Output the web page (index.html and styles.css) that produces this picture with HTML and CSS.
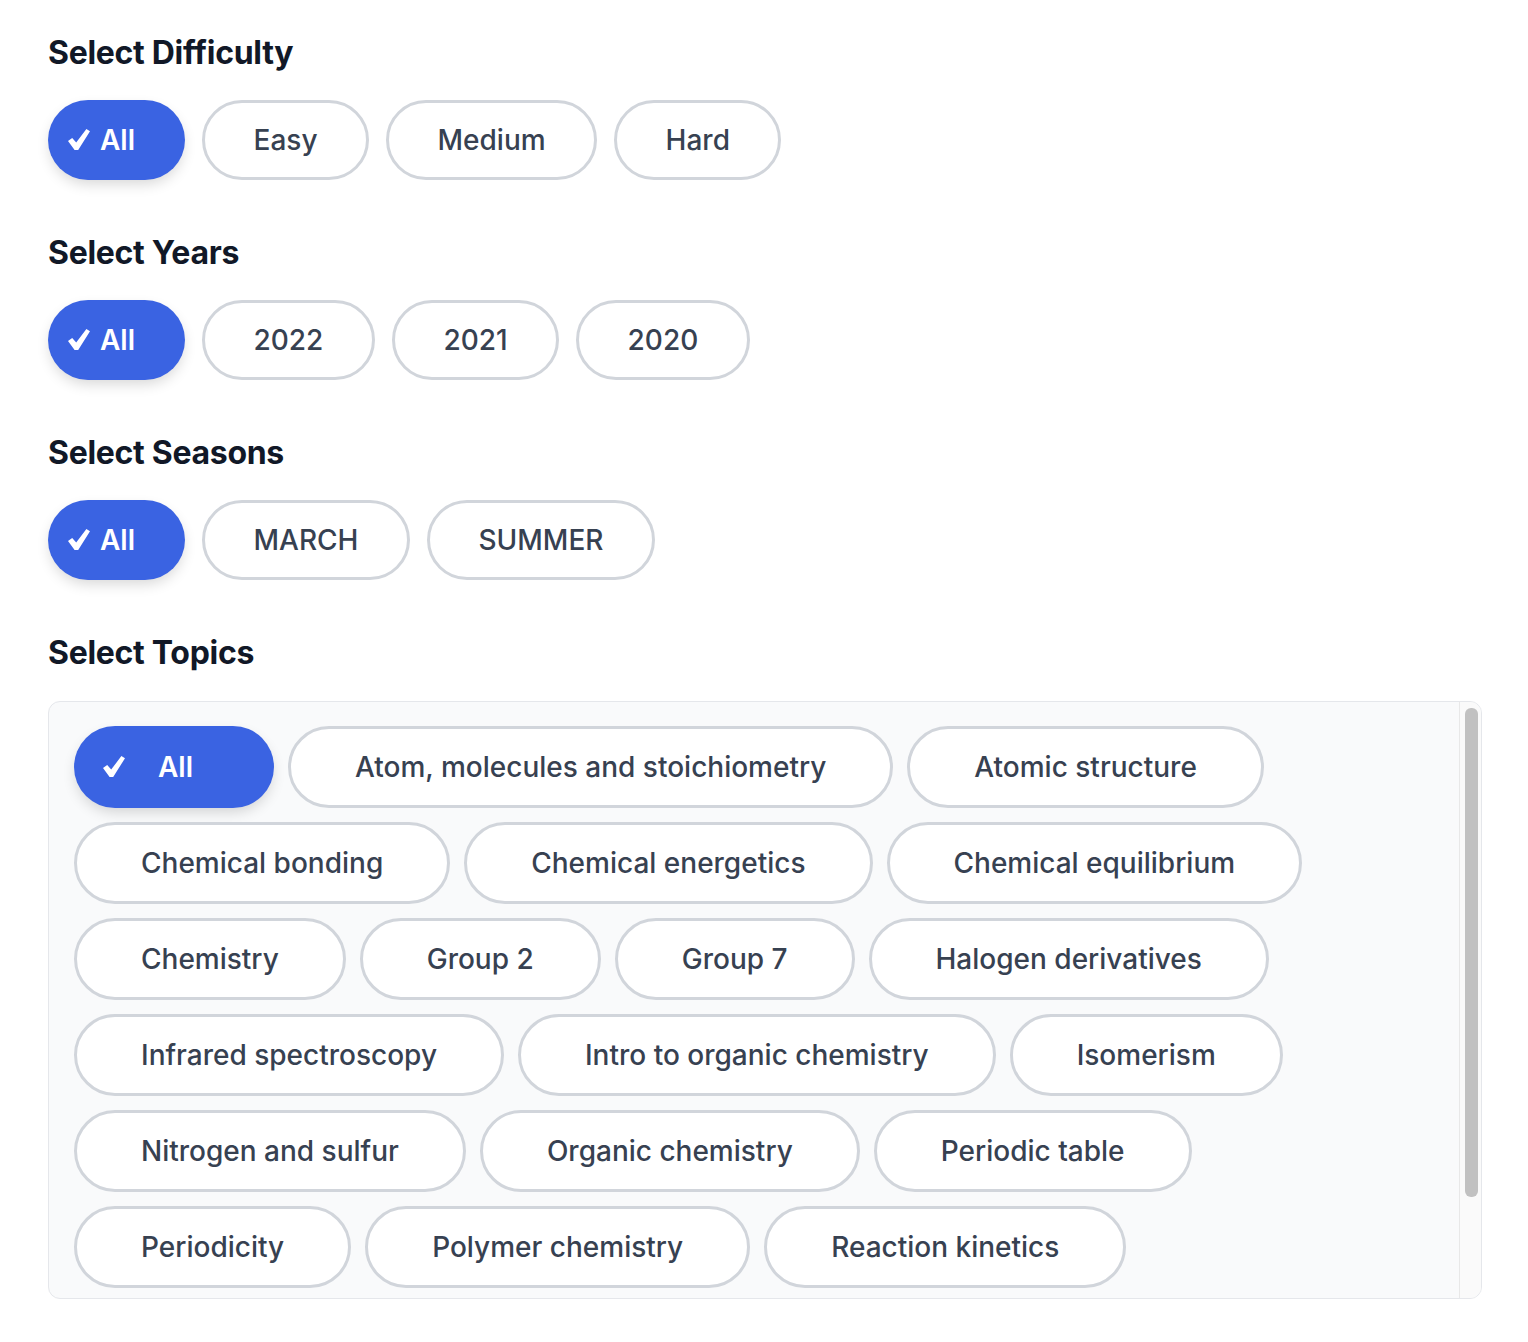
FILE: index.html
```html
<!DOCTYPE html>
<html lang="en">
<head>
<meta charset="utf-8">
<title>Filters</title>
<link rel="stylesheet" href="styles.css">
</head>
<body>
<div class="page">
  <section class="section">
    <h2 class="title">Select Difficulty</h2>
    <div class="options">
      <button class="chip chip-active"><svg class="check" viewBox="0 0 22 21" aria-hidden="true"><path d="M0 12 L4.2 9 L8.2 13.6 L18.4 0 L22 2.2 L10.2 21 L6.6 21 Z"/></svg>All</button>
      <button class="chip">Easy</button>
      <button class="chip">Medium</button>
      <button class="chip">Hard</button>
    </div>
  </section>
  <section class="section">
    <h2 class="title">Select Years</h2>
    <div class="options">
      <button class="chip chip-active"><svg class="check" viewBox="0 0 22 21" aria-hidden="true"><path d="M0 12 L4.2 9 L8.2 13.6 L18.4 0 L22 2.2 L10.2 21 L6.6 21 Z"/></svg>All</button>
      <button class="chip">2022</button>
      <button class="chip">2021</button>
      <button class="chip">2020</button>
    </div>
  </section>
  <section class="section">
    <h2 class="title">Select Seasons</h2>
    <div class="options">
      <button class="chip chip-active"><svg class="check" viewBox="0 0 22 21" aria-hidden="true"><path d="M0 12 L4.2 9 L8.2 13.6 L18.4 0 L22 2.2 L10.2 21 L6.6 21 Z"/></svg>All</button>
      <button class="chip">MARCH</button>
      <button class="chip">SUMMER</button>
    </div>
  </section>
  <section class="section topics-section">
    <h2 class="title">Select Topics</h2>
    <div class="topics-box">
      <div class="topics-scroll">
        <div class="topics">
          <button class="topic topic-active"><svg class="check topic-check" viewBox="0 0 22 21" aria-hidden="true"><path d="M0 12 L4.2 9 L8.2 13.6 L18.4 0 L22 2.2 L10.2 21 L6.6 21 Z"/></svg>All</button>
          <button class="topic">Atom, molecules and stoichiometry</button>
          <button class="topic">Atomic structure</button>
          <button class="topic">Chemical bonding</button>
          <button class="topic">Chemical energetics</button>
          <button class="topic">Chemical equilibrium</button>
          <button class="topic">Chemistry</button>
          <button class="topic">Group 2</button>
          <button class="topic">Group 7</button>
          <button class="topic">Halogen derivatives</button>
          <button class="topic">Infrared spectroscopy</button>
          <button class="topic">Intro to organic chemistry</button>
          <button class="topic">Isomerism</button>
          <button class="topic">Nitrogen and sulfur</button>
          <button class="topic">Organic chemistry</button>
          <button class="topic">Periodic table</button>
          <button class="topic">Periodicity</button>
          <button class="topic">Polymer chemistry</button>
          <button class="topic">Reaction kinetics</button>
        </div>
      </div>
      <div class="scrollbar">
        <div class="scrollbar-thumb"></div>
      </div>
    </div>
  </section>
</div>
</body>
</html>
```

FILE: styles.css
```css
* {
  box-sizing: border-box;
}

body {
  margin: 0;
  background: #ffffff;
  font-family: Inter, "Noto Sans", "Liberation Sans", sans-serif;
  color: #111827;
}

.page {
  padding: 33px 46px 0 48px;
}

.section {
  margin-bottom: 53px;
}

.title {
  margin: 0 0 27px 0;
  font-size: 32px;
  line-height: 40px;
  font-weight: 700;
  color: #111827;
  letter-spacing: -0.3px;
}

.options {
  display: flex;
  gap: 17px;
}

.chip {
  height: 80px;
  padding: 0 48.5px;
  border: 3px solid #d1d5db;
  border-radius: 40px;
  background: #ffffff;
  font-family: inherit;
  font-size: 28px;
  font-weight: 500;
  color: #374151;
  display: flex;
  align-items: center;
  cursor: pointer;
}

.chip-active {
  border: none;
  padding: 0 50px 0 20px;
  background: #3a63e2;
  color: #ffffff;
  font-weight: 600;
  box-shadow: 0 6px 14px -2px rgba(0, 0, 0, 0.16);
}

.check {
  display: block;
  flex: none;
  width: 22px;
  height: 21px;
  margin-right: 10px;
  margin-top: -1px;
  fill: #ffffff;
}

.topics-section .title {
  margin-bottom: 28px;
}

.topics-box {
  display: flex;
  height: 598px;
  border: 1px solid #e5e7eb;
  border-radius: 12px;
  background: #f9fafb;
  overflow: hidden;
}

.topics-scroll {
  flex: 1;
  overflow: hidden;
  padding: 24px 25px;
}

.scrollbar {
  width: 22px;
  flex: none;
  background: #fafafa;
  border-left: 1px solid #e8e8e8;
  padding: 6px 3px 0 5px;
}

.scrollbar-thumb {
  height: 489px;
  background: #c1c1c1;
  border-radius: 6px;
}

.topics {
  display: flex;
  flex-wrap: wrap;
  gap: 14px;
}

.topic {
  height: 82px;
  padding: 0 64px;
  border: 3px solid #d1d5db;
  border-radius: 41px;
  background: #ffffff;
  font-family: inherit;
  font-size: 28px;
  font-weight: 500;
  color: #374151;
  display: flex;
  align-items: center;
  cursor: pointer;
}

.topic-active {
  border: none;
  padding: 0 81px 0 29px;
  background: #3a63e2;
  color: #ffffff;
  font-weight: 600;
  box-shadow: 0 6px 14px -2px rgba(0, 0, 0, 0.16);
}

.topic-check {
  margin-right: 33px;
}
```
